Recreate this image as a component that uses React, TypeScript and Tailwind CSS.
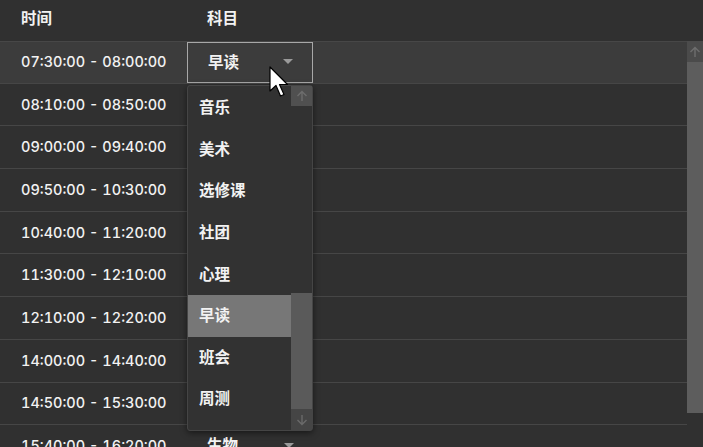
import React from 'react'

const times = [
  '07:30:00 - 08:00:00',
  '08:10:00 - 08:50:00',
  '09:00:00 - 09:40:00',
  '09:50:00 - 10:30:00',
  '10:40:00 - 11:20:00',
  '11:30:00 - 12:10:00',
  '12:10:00 - 12:20:00',
  '14:00:00 - 14:40:00',
  '14:50:00 - 15:30:00',
  '15:40:00 - 16:20:00',
]

// only the first and last rows' subjects are visible, the rest sit under the open list
const subjects: Record<number, string> = { 0: '早读', 9: '生物' }

const options = ['音乐', '美术', '选修课', '社团', '心理', '早读', '班会', '周测']

function Caret() {
  return (
    <svg width="10" height="6" viewBox="0 0 10 6" className="text-[#9a9a9a]">
      <path d="M0 0 L10 0 L5 5 Z" fill="currentColor" />
    </svg>
  )
}

function Arrow({ down }: { down?: boolean }) {
  return (
    <svg width="12" height="12" viewBox="0 0 12 12" className={down ? 'rotate-180' : ''}>
      <path d="M6 11 V1.5 M1.5 6 L6 1.5 L10.5 6" stroke="currentColor" strokeWidth="1.4" fill="none" />
    </svg>
  )
}

function Cursor() {
  return (
    <svg width="20" height="34" viewBox="0 0 20 34" className="absolute left-[269px] top-[66px]">
      <path
        d="M1 1 L1 25 L7 19.5 L11.5 30 L15 28.5 L10.5 18.5 L18.5 18.5 Z"
        fill="#fff"
        stroke="#000"
        strokeWidth="1.2"
        strokeLinejoin="round"
      />
    </svg>
  )
}

export default function App() {
  return (
    <div
      className="relative w-[703px] h-[447px] overflow-hidden bg-[#303030] text-[15.5px] text-[#f2f2f2] font-semibold"
      style={{ fontFamily: 'Inter, "Noto Sans CJK SC", sans-serif' }}
    >
      <div className="flex h-[41px] items-center pb-[3px]">
        <div className="w-[187px] pl-[21px]">时间</div>
        <div className="pl-[20px]">科目</div>
      </div>

      <div className="flex">
        <div className="flex-1">
          {times.map((t, i) => (
            <div
              key={t}
              className={
                'flex h-[42.7px] items-center border-b border-[#464646] ' +
                (i === 0 ? 'bg-[#3c3c3c] border-t border-t-[#474747]' : '')
              }
            >
              <div className="w-[187px] pl-[21px] text-[14.5px] font-medium tabular-nums">{t}</div>
              {subjects[i] && (
                <div
                  className={
                    'flex h-full w-[126px] items-center justify-between pl-[20px] pr-[19px] ' +
                    (i === 0 ? 'border border-[#a8a8a8]' : '')
                  }
                >
                  <span>{subjects[i]}</span>
                  <Caret />
                </div>
              )}
            </div>
          ))}
        </div>

        <div className="flex h-[372px] w-[16px] flex-col bg-[#5d5d5d]">
          <div className="flex h-[21px] items-center justify-center bg-[#4b4b4b] text-[#6e6e6e]">
            <Arrow />
          </div>
        </div>
      </div>

      <div className="absolute left-[187px] top-[85px] flex h-[346px] w-[126px] rounded-[3px] border border-[#454545] bg-[#323232] shadow-[0_2px_6px_rgba(0,0,0,0.5)]">
        <div className="flex-1 pt-[1px]">
          {options.map(o => (
            <div
              key={o}
              className={
                'flex h-[41.6px] items-center pl-[11px] ' + (o === '早读' ? 'bg-[#777777]' : '')
              }
            >
              {o}
            </div>
          ))}
        </div>
        <div className="flex w-[21px] flex-col">
          <div className="flex h-[20px] items-center justify-center bg-[#505050] text-[#6d6d6d]">
            <Arrow />
          </div>
          <div className="flex-1" />
          <div className="h-[116px] bg-[#5a5a5a]" />
          <div className="flex h-[21px] items-center justify-center bg-[#454545] text-[#6a6a6a]">
            <Arrow down />
          </div>
        </div>
      </div>

      <Cursor />
    </div>
  )
}
